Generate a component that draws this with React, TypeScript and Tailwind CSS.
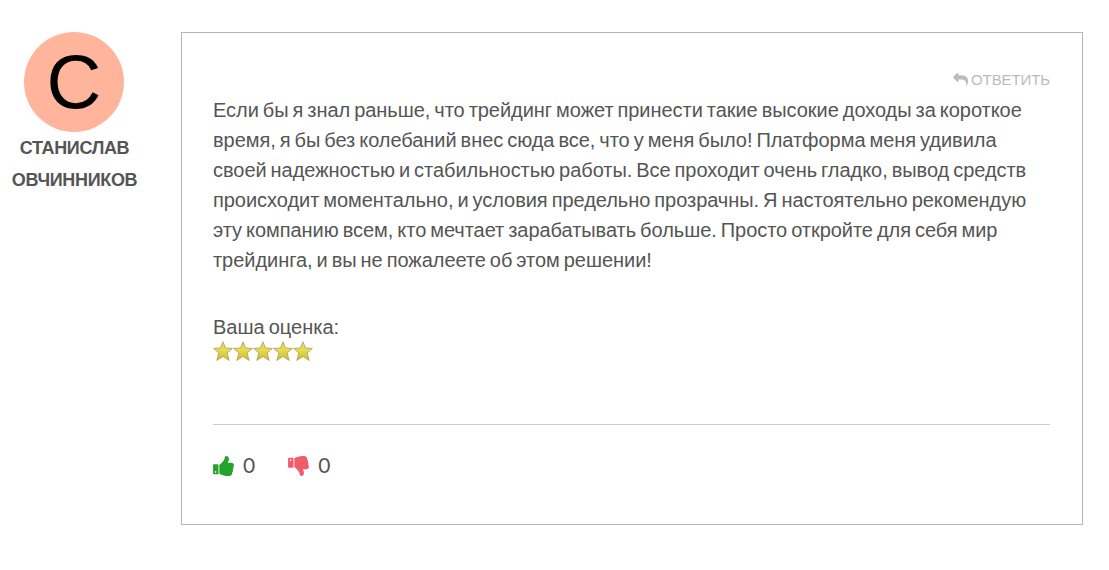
// src/components/ReviewComment.tsx
import { useState } from "react";

const review = {
  author: "Станислав Овчинников",
  initial: "С",
  rating: 5,
  lines: [
    "Если бы я знал раньше, что трейдинг может принести такие высокие доходы за короткое",
    "время, я бы без колебаний внес сюда все, что у меня было! Платформа меня удивила",
    "своей надежностью и стабильностью работы. Все проходит очень гладко, вывод средств",
    "происходит моментально, и условия предельно прозрачны. Я настоятельно рекомендую",
    "эту компанию всем, кто мечтает зарабатывать больше. Просто откройте для себя мир",
    "трейдинга, и вы не пожалеете об этом решении!",
  ],
};

function ReplyIcon() {
  return (
    <svg viewBox="0 128 1792 1536" className="mb-0.5 h-[13px] w-[15px]" fill="currentColor">
      <path d="M1792 1120q0 166-127 451-3 7-10.5 24t-13.5 30-13 22q-12 17-28 17-15 0-23.5-10t-8.5-25q0-9 2.5-26.5t2.5-23.5q5-68 5-123 0-101-17.5-181t-48.5-138.5-80-101-105.5-69.5-133-42.5-154-21.5-175.5-6h-224v256q0 26-19 45t-45 19-45-19l-512-512q-19-19-19-45t19-45l512-512q19-19 45-19t45 19 19 45v256h224q713 0 875 403 53 134 53 333z" />
    </svg>
  );
}

function ThumbIcon({ className }: { className: string }) {
  return (
    <svg viewBox="64 128 1600 1536" className={`h-5 w-[21px] ${className}`} fill="currentColor">
      <path d="M320 1344q0-26-19-45t-45-19q-27 0-45.5 19t-18.5 45q0 27 18.5 45.5t45.5 18.5q26 0 45-18.5t19-45.5zm160-512v640q0 26-19 45t-45 19h-288q-26 0-45-19t-19-45v-640q0-26 19-45t45-19h288q26 0 45 19t19 45zm1184 0q0 86-55 149 15 44 15 76 3 76-43 137 17 56 0 117-15 57-54 94 9 112-49 181-64 76-197 78h-129q-66 0-144-15.5t-121.5-29-120.5-39.5q-123-43-158-44-26-1-45-19.5t-19-44.5v-641q0-25 18-43.5t43-20.5q24-2 76-59t101-121q68-87 101-120 18-18 31-48t17.5-48.5 13.5-60.5q7-39 12.5-61t19.5-52 34-50q19-19 45-19 46 0 82.5 10.5t60 26 40 40.5 24 45 12 50 5 45 .5 39q0 38-9.5 76t-19 60-27.5 56q-3 6-10 18t-11 22-8 24h277q78 0 135 57t57 135z" />
    </svg>
  );
}

function Star() {
  return (
    <svg viewBox="0 0 20 20" className="h-5 w-5">
      <defs>
        <linearGradient id="star" x1="0" y1="0" x2="0" y2="1">
          <stop offset="0" stopColor="#e0d68a" />
          <stop offset="0.45" stopColor="#e8dc4a" />
          <stop offset="1" stopColor="#cabb2a" />
        </linearGradient>
      </defs>
      <path
        d="M10 .8 12.4 7 19.4 7.4 14 12 16.2 19.4 10 15.4 3.8 19.4 6 12 .6 7.4 7.6 7Z"
        fill="url(#star)"
        stroke="#b8ab62"
        strokeWidth="1"
        strokeLinejoin="round"
      />
    </svg>
  );
}

export default function ReviewComment() {
  const [likes, setLikes] = useState(0);
  const [dislikes, setDislikes] = useState(0);

  return (
    <main className="flex h-[570px] w-[1109px] items-start bg-white pt-8 font-['Liberation_Sans',Arial,sans-serif] text-[#555]">
      <div className="flex w-[149px] shrink-0 flex-col items-center pr-px text-center">
        <div className="flex size-[100px] items-center justify-center rounded-full bg-[#ffb59b] text-[76px] leading-none text-black">
          {review.initial}
        </div>
        <h3 className="ml-px w-[130px] text-lg leading-8 font-bold tracking-[-0.33px] uppercase">{review.author}</h3>
      </div>

      <article className="ml-8 h-[493px] w-[902px] border border-[#b5b5b5] pt-8 pr-8 pl-[31px]">
        <div className="flex h-[30px] items-center justify-end text-[#bbb]">
          <button className="flex items-center gap-[3px] text-[15px] tracking-[-0.1px] uppercase">
            <ReplyIcon />
            Ответить
          </button>
        </div>

        <p className="text-xl leading-[30px] tracking-[-0.045px] whitespace-nowrap [word-spacing:-1.5px]">
          {review.lines.map(line => (
            <span key={line} className="block">{line}</span>
          ))}
        </p>

        <div className="mt-[37px]">
          <p className="text-xl leading-[30px] [word-spacing:-1.5px]">Ваша оценка:</p>
          <div className="-mt-px flex">
            {Array.from({ length: review.rating }, (_, i) => (
              <Star key={i} />
            ))}
          </div>
        </div>

        <div className="mt-[63px] flex gap-[33px] border-t border-[#ccc] pt-[26px] leading-[30px]">
          <button className="flex h-[30px] items-center gap-[9px]" onClick={() => setLikes(likes + 1)}>
            <ThumbIcon className="text-[#24a22b]" />
            <span className="pb-0.5 font-['Lato',sans-serif] text-[21px]">{likes}</span>
          </button>
          <button className="flex h-[30px] items-center gap-[9px]" onClick={() => setDislikes(dislikes + 1)}>
            <ThumbIcon className="-scale-y-100 text-[#f15b6c]" />
            <span className="pb-0.5 font-['Lato',sans-serif] text-[21px]">{dislikes}</span>
          </button>
        </div>
      </article>
    </main>
  );
}
